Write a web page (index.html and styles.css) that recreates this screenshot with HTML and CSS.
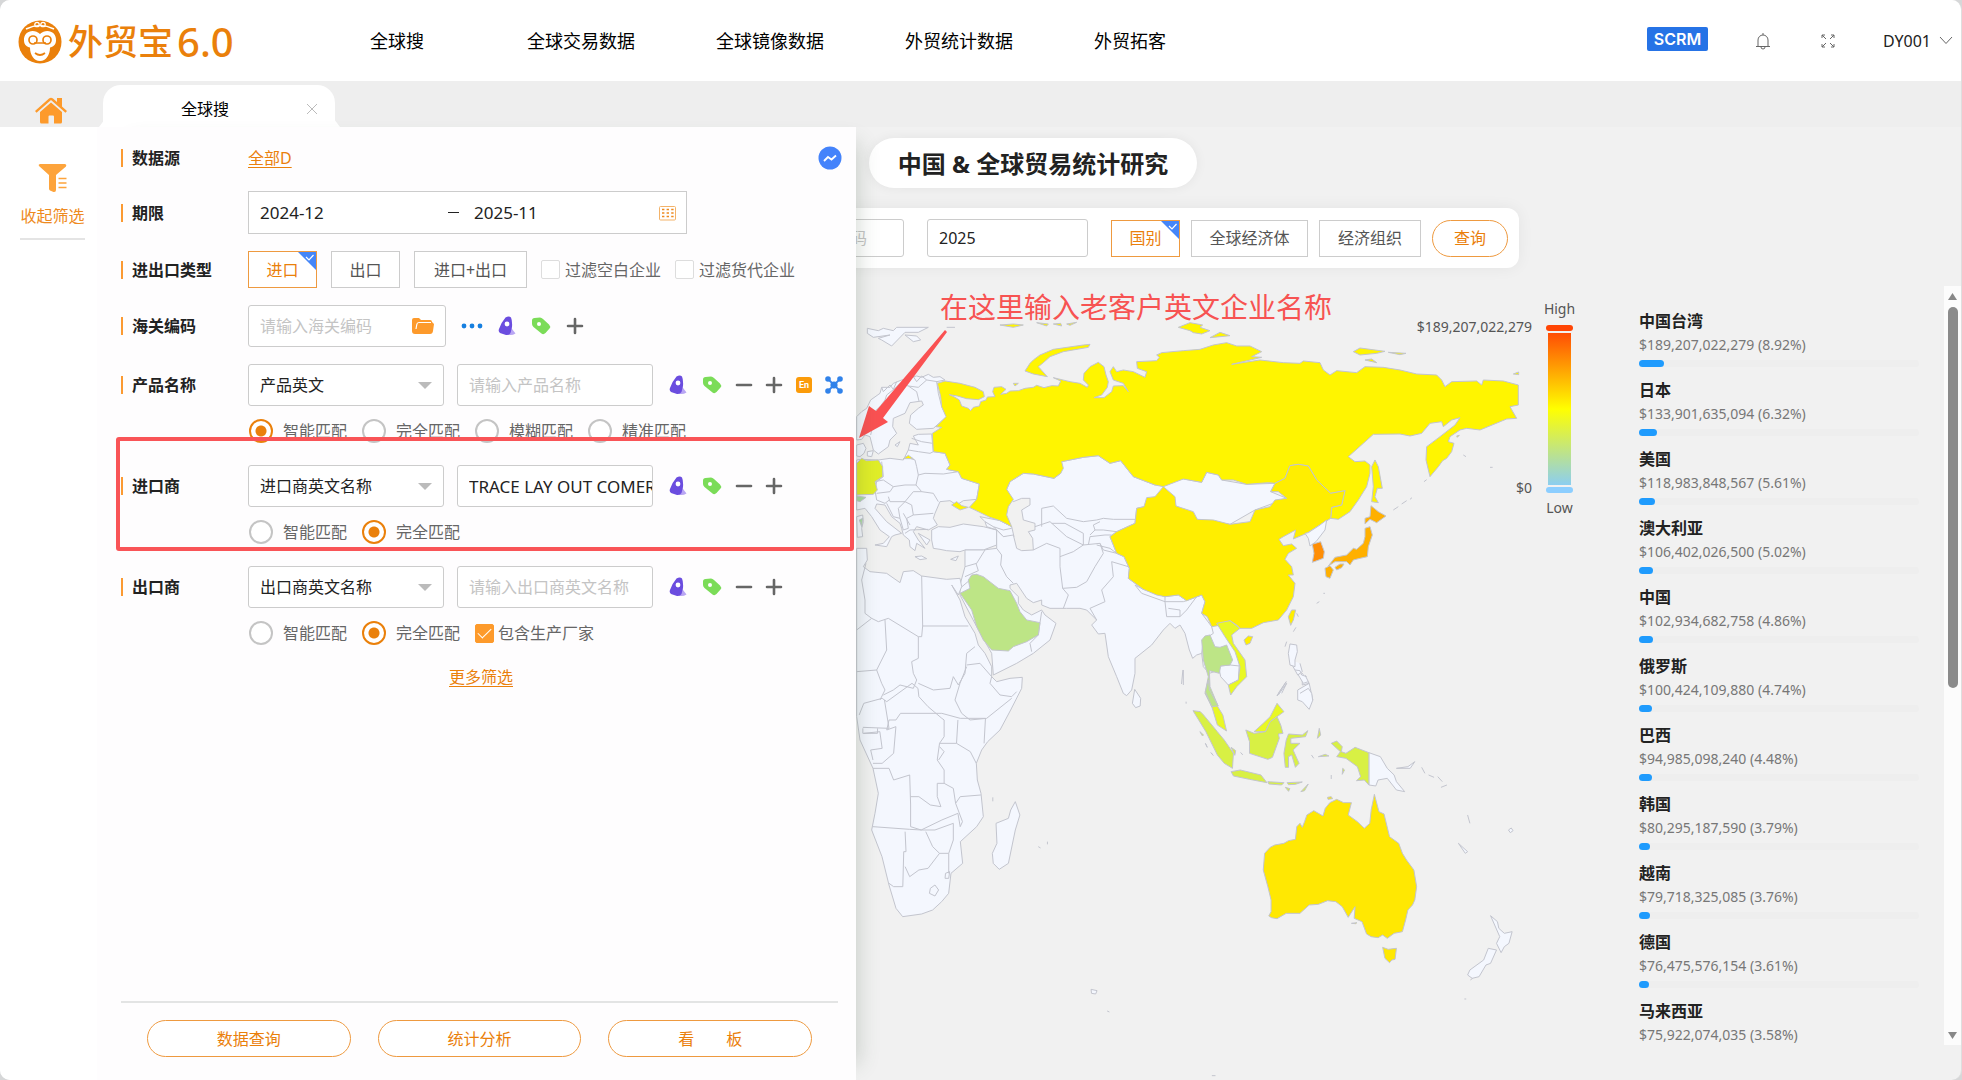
FILE: index.html
```html
<!DOCTYPE html>
<html lang="zh-CN">
<head>
<meta charset="utf-8">
<title>外贸宝6.0 - 全球搜</title>
<link rel="stylesheet" href="styles.css">
</head>
<body>
<svg class="defs" aria-hidden="true">
  <symbol id="rocket" viewBox="0 0 20 20"><path d="M12 9l6.500 8.500q-4 2.500-8 1z" fill="#b9a6f3"/><path d="M8.500 1.500Q12-.5 14 1.500Q15.500 5 15 11L13.500 17Q12 19.500 9 19L3 17Q1 15.500 2 13Q4.500 6 8.500 1.500z" fill="#6b4ddf"/><circle cx="10" cy="8" r="2.400" fill="#fff"/></symbol>
  <symbol id="tag" viewBox="0 0 20 20"><path d="M1 4.500Q1 2 3.500 2L9 1.500Q10.500 1.500 12 3L18 8.500Q20 10.500 18.500 12.500L14.500 17Q12.500 19 10.500 17.500L2.500 11Q1 9.500 1 8z" fill="#7bdc58"/><circle cx="8" cy="8" r="2" fill="#fff"/></symbol>
  <symbol id="plus" viewBox="0 0 20 20"><path d="M10 3v14M3 10h14" stroke="#666" stroke-width="2.600" stroke-linecap="round"/></symbol>
  <symbol id="minus" viewBox="0 0 20 20"><path d="M3 10h14" stroke="#666" stroke-width="2.600" stroke-linecap="round"/></symbol>
  <symbol id="corner" viewBox="0 0 18 18"><path d="M0 0h18v18z" fill="#4586f8"/><path d="M8 5l3 3 4.500-5" fill="none" stroke="#fff" stroke-width="1.200"/></symbol>
</svg>
<div class="frame">
  <header class="header">
    <a class="logo" href="#">
      <svg width="44" height="44" viewBox="0 0 44 44"><circle cx="22" cy="22" r="21.500" fill="#ea800b"/><path d="M22 14C16 8 5 11 6 21c.4 4 3 6 6 6.500C12 35 16 41 22 41s10-6 10-13.500c3-.5 5.600-2.500 6-6.500C39 11 28 8 22 14z" fill="#fff"/><path d="M8 9Q22 2 36 9" fill="none" stroke="#fff" stroke-width="1.500"/><g fill="none" stroke="#ea800b" stroke-width="1.700"><circle cx="15" cy="20" r="4"/><circle cx="29" cy="20" r="4"/><path d="M16 23h12M17 33q5 4 10 0"/></g><g fill="none" stroke="#fff" stroke-width="1.300"><circle cx="19" cy="4.500" r="2.200"/><circle cx="25" cy="4.500" r="2.200"/></g></svg>
      <span class="logo-name">外贸宝</span><span class="logo-ver">6.0</span>
    </a>
    <nav class="nav">
      <a class="first" href="#">全球搜</a><a href="#">全球交易数据</a><a href="#">全球镜像数据</a><a href="#">外贸统计数据</a><a href="#">外贸拓客</a>
    </nav>
    <div class="tools">
      <a class="scrm" href="#">SCRM</a>
      <button class="plain" aria-label="通知"><svg width="16" height="18" viewBox="0 0 16 18" fill="none" stroke="#666"><path d="M3 14V8a5 5 0 0 1 10 0v6M1 14.500h14M6 15a2 2 0 0 0 4 0M8 1v2"/></svg></button>
      <button class="plain" aria-label="全屏"><svg width="14" height="14" viewBox="0 0 14 14" fill="none" stroke="#666"><path d="M1 4V1h3M1 1l4 4M10 1h3v3M13 1L9 5M1 10v3h3M1 13l4-4M13 10v3h-3M13 13L9 9"/></svg></button>
      <button class="plain user">DY001<svg width="14" height="9" viewBox="0 0 14 9" fill="none" stroke="#666"><path d="M1 1l6 6.500L13 1"/></svg></button>
    </div>
  </header>
  <div class="tabs">
    <a class="home" href="#" aria-label="首页"><svg width="32" height="27" viewBox="0 0 32 27" fill="#fd9a2b"><path d="M0 14L14 1.500Q16 0 18 1.500L22 5V1h5v8.500L32 14l-1.500 1.800L16 3 1.500 15.800z"/><path d="M5 15L16 5.500 27 15v10q0 1.500-1.500 1.500H19v-7q0-1-1-1h-3.500q-1 0-1 1v7h-7Q5 26.500 5 25z"/></svg></a>
    <div class="tab"><span>全球搜</span><button class="plain" aria-label="关闭"><svg width="10" height="10" viewBox="0 0 10 10" stroke="#bbb"><path d="M0 0l10 10M10 0L0 10"/></svg></button></div>
  </div>
  <div class="body">
    <aside class="rail">
      <button class="plain fold"><svg width="30" height="30" viewBox="0 0 30 30"><path d="M1 3Q0 1 2.500 1h24Q29 1 28 3.500L18 12v15q0 2.500-2.500 2L12 27.500Q11 27 11 25.500V12z" fill="#fda43c"/><path d="M20.500 15.500h8M20.500 20h8M20.500 24.500h8" stroke="#fda43c" stroke-width="1.600"/></svg>收起筛选</button>
    </aside>
    <form class="panel">
      <div class="row source"><span class="label">数据源</span><a class="link" href="#">全部D</a>
        <button class="plain chat" type="button" aria-label="消息"><svg width="24" height="24" viewBox="0 0 24 24"><circle cx="12" cy="12" r="11.500" fill="#4483fb"/><path d="M6 15l4-4 3.500 2.500L18 9.500" fill="none" stroke="#fff" stroke-width="1.800"/></svg></button></div>
      <div class="row period"><span class="label">期限</span>
        <div class="range"><input class="from" aria-label="开始" value="2024-12"><i class="dash"></i><input aria-label="结束" value="2025-11">
        <svg width="17" height="16" viewBox="0 0 17 16"><rect x=".5" y="1.500" width="16" height="13.500" rx="1" fill="none" stroke="#f3b36a"/><path d="M3 4.500h12M3 8h12M3 11.500h12" stroke="#ee8a20" stroke-width="1.600" stroke-dasharray="2.400 2.200"/></svg></div></div>
      <div class="row kind"><span class="label">进出口类型</span>
        <div class="choices"><button type="button" class="pick on">进口<svg><use href="#corner"/></svg></button><button type="button" class="pick">出口</button><button type="button" class="pick wide">进口+出口</button>
        <label class="check"><input type="checkbox">过滤空白企业</label><label class="check"><input type="checkbox">过滤货代企业</label></div></div>
      <div class="row"><label class="label" for="hs">海关编码</label>
        <div class="field"><input id="hs" placeholder="请输入海关编码"><svg width="22" height="18" viewBox="0 0 22 18"><path d="M0 3Q0 1 2 1h5l2 2h9q2 0 2 2l2 2-1 7q-.4 3-3 3H3Q0 17 0 14z" fill="#fd9a2b"/><path d="M4 12l.8-4.500Q5 5.500 7 5.500H19" fill="none" stroke="#fff" stroke-width="1.200"/></svg></div>
        <div class="acts hs"><svg class="dots" viewBox="0 0 22 6" fill="#167fe0"><circle cx="3" cy="3" r="2.400"/><circle cx="11" cy="3" r="2.400"/><circle cx="19" cy="3" r="2.400"/></svg><svg><use href="#rocket"/></svg><svg><use href="#tag"/></svg><svg><use href="#plus"/></svg></div></div>
      <div class="row"><label class="label" for="prod">产品名称</label>
        <div class="pair"><div class="select"><select id="prod"><option>产品英文</option></select></div><input aria-label="产品名称" placeholder="请输入产品名称"></div>
        <div class="acts"><svg><use href="#rocket"/></svg><svg><use href="#tag"/></svg><svg><use href="#minus"/></svg><svg><use href="#plus"/></svg>
        <span class="en">En</span>
        <svg viewBox="0 0 20 20"><path d="M4 4l12 12M16 4L4 16" stroke="#3d86ec" stroke-width="1.800"/><g fill="#3182ea"><circle cx="4" cy="4" r="2.800"/><circle cx="16" cy="4" r="2.800"/><circle cx="4" cy="16" r="2.800"/><circle cx="16" cy="16" r="2.800"/><circle cx="10" cy="10" r="3.600"/></g></svg></div></div>
      <div class="radios"><label><input type="radio" name="a" checked>智能匹配</label><label><input type="radio" name="a">完全匹配</label><label><input type="radio" name="a">模糊匹配</label><label><input type="radio" name="a">精准匹配</label></div>
      <div class="marked">
      <div class="row"><label class="label" for="imp">进口商</label>
        <div class="pair"><div class="select"><select id="imp"><option>进口商英文名称</option></select></div><input class="company" aria-label="进口商英文名称" value="TRACE LAY OUT COMERCIO"></div>
        <div class="acts"><svg><use href="#rocket"/></svg><svg><use href="#tag"/></svg><svg><use href="#minus"/></svg><svg><use href="#plus"/></svg></div></div>
      <div class="radios"><label><input type="radio" name="b">智能匹配</label><label><input type="radio" name="b" checked>完全匹配</label></div>
      </div>
      <div class="row"><label class="label" for="exp">出口商</label>
        <div class="pair"><div class="select"><select id="exp"><option>出口商英文名称</option></select></div><input aria-label="出口商英文名称" placeholder="请输入出口商英文名称"></div>
        <div class="acts"><svg><use href="#rocket"/></svg><svg><use href="#tag"/></svg><svg><use href="#minus"/></svg><svg><use href="#plus"/></svg></div></div>
      <div class="radios"><label><input type="radio" name="c">智能匹配</label><label><input type="radio" name="c" checked>完全匹配</label><label class="check"><input type="checkbox" checked>包含生产厂家</label></div>
      <a class="link more" href="#">更多筛选</a>
      <div class="foot"><button type="button" class="round">数据查询</button><button type="button" class="round">统计分析</button><button type="button" class="round">看　　板</button></div>
    </form>
    <main class="stage">
      <section class="world">
        <h1 class="title">中国 &amp; 全球贸易统计研究</h1>
        <div class="bar"><input aria-label="海关编码" placeholder="请输入海关编码"><input aria-label="年份" value="2025">
          <div class="scope"><button class="pick on">国别<svg><use href="#corner"/></svg></button><button class="pick economy">全球经济体</button><button class="pick org">经济组织</button><button class="round ask">查询</button></div></div>
        <div class="chart">
          <svg class="map" viewBox="856 268 744 812" preserveAspectRatio="xMinYMin meet" role="img" aria-label="世界地图">
            <g class="land" transform="translate(850 300) scale(.33333)">
              <path d="M20 350L35 335 50 325 62 300 90 280 95 262 120 262 130 250 155 240 200 228 215 232 235 223 250 232 270 230 285 240 260 245 265 280 275 320 290 350 250 385 200 388 178 370 182 345 205 325 220 315 215 303 180 308 165 340 130 355 128 380 140 400 120 420 115 440 85 462 70 450 60 410 45 405 35 418 20 420z"/>
              <path class="line" d="M62 405L70 370 68 340 90 320 105 300 110 285 135 265 150 250 175 258 200 275 207 303M175 258L205 262 230 240 262 245M95 262L100 275 120 255 130 268 140 245M190 230L200 245 215 228 230 240"/>
              <path d="M20 435L40 430 48 445 42 460 30 470 20 468zM52 455L70 452 65 470 52 468zM135 435L150 425 142 440zM52 85L85 92 100 85 130 92 140 82 235 82 205 97 165 97 125 138 95 120 85 115 120 105 70 112 52 100zM165 105L200 108 212 120 190 125zM290 82h25"/>
              <path d="M190 408L205 403 245 402 250 455 285 460 300 495 290 508 325 515 335 535 388 552 380 598 340 602 320 615 300 602 270 605 255 640 250 655 262 675 235 690 200 680 190 695 205 720 225 745 200 730 195 752 180 740 178 720 160 705 155 685 150 670 125 650 105 615 80 612 75 625 110 665 155 700 135 705 125 710 110 740 75 735 100 730 118 710 90 690 65 650 45 625 20 630V480L35 478 85 480 120 475 160 480 165 470 175 450 180 430 205 435z"/>
              <path class="line" d="M95 485L100 530 80 545 75 570 20 585M75 545L100 540 130 560 165 555 198 555 205 525 200 500 195 480 165 470M175 450L205 455 240 460 250 455M185 415L215 425 248 430M205 525L225 520 280 522 325 515M198 555L215 575 250 580 265 605M130 560L120 575 80 580M115 590L120 605 165 605 190 575 215 575M75 570L80 600 105 610 118 600M110 610L130 650 150 655 145 625 165 605 185 615 190 645 250 640M150 655L160 690 175 685 170 655 190 645M165 700L180 690 235 688M160 640L180 675"/>
              <path d="M20 650L38 645 40 665 35 685 38 710 22 712zM195 770L215 768 230 776 210 779zM302 778L325 768 318 782zM205 700L240 720 230 735z"/>
              <path d="M245 690L265 680 300 682 340 672 400 680 440 690 440 735 400 750 345 750 330 755 290 752 270 748 250 745 245 720zM390 650L450 662 485 680 492 710 460 710 440 690 410 680 405 665z"/>
              <path class="line" d="M405 665L430 680 460 690 485 685M430 680L455 705 440 710"/>
              <path d="M470 568L480 545 520 520 550 522 612 535 632 520 635 485 700 472 745 467 780 490 812 482 850 530 915 555 1000 537 1055 547 1070 517 1105 525 1115 540 1190 553 1275 550 1262 575 1310 595 1215 630 1140 673 1042 658 978 618 915 590 882 620 860 625 855 670 800 695 780 710 800 760 822 770 838 805 835 835 880 868 945 890 985 885 1010 902 1055 885 1065 905 1055 940 1085 980 1105 970 1130 1010 1160 1050 1168 1090 1165 1140 1135 1155 1112 1130 1108 1110 1078 1120 1060 1100 1055 1060 1040 1065 1028 1075 1018 1050 1005 1000 990 975 975 985 960 970 940 990 905 1035 855 1075 855 1120 845 1170 830 1187 820 1180 800 1130 775 1070 765 1000 745 1002 725 975 740 960 710 930 690 925 650 925 600 925 575 915 575 900 550 908 530 895 500 850 480 855 480 865 505 890 505 910 520 930 545 945 575 930 585 945 618 970 600 1020 550 1060 500 1090 430 1125 425 1060 380 980 330 885 330 855 345 800 345 750 400 750 440 745 440 690 460 710 490 705 500 745 515 752 550 750 548 715 535 695 555 690 555 670 520 660 515 630 540 615 540 595 515 595 490 605z"/>
              <path class="line" d="M440 745L455 765 452 795 470 830 490 850M550 750L590 730 630 745 630 800 638 865 655 885 640 925M630 770L670 755 700 735 750 730 760 760 735 800 710 845 680 862 638 865M575 680V625L610 618 650 655 700 665 740 660 760 655 790 658 855 658M555 680L600 665 650 710 700 735 700 700 645 670 605 670M720 705L735 690 760 690 800 695M735 690L730 675 750 665M740 735L780 745 800 760M715 735L720 710 765 705 785 705M740 960L720 925 765 905 755 870 790 830 785 785 835 800M750 730L760 750 800 760M855 855L875 880 945 905 945 890M945 905L1000 905 1010 902M945 905L950 950 990 950 990 930 955 925M990 950L1010 930 1040 890 1055 885M855 855L880 868M345 800L380 790 405 750M330 865L380 823M345 830L385 812 378 790M540 1030L545 1055M540 1030L565 1005 570 968 575 935M1085 980L1090 1000 1060 1020 1055 1060M1112 1098L1140 1095 1168 1098"/>
              <path d="M20 745L50 745 52 780 40 800 60 815 110 820 150 848 160 815 190 812 215 828 290 838 330 835 335 860 325 885 305 855 330 900 345 950 375 1000 385 1035 405 1060 425 1100 425 1130 440 1145 480 1135 517 1132 515 1165 482 1230 450 1290 413 1325 395 1350 379 1390 382 1440 393 1480 400 1550 380 1580 331 1625 338 1690 303 1720 296 1780 275 1805 248 1830 215 1842 158 1850 138 1825 117 1755 96 1670 65 1590 75 1540 85 1480 69 1405 30 1320 20 1250z"/>
              <path class="line" d="M215 828L218 978H355M218 978L215 1010 205 1010V1075L185 1085 190 1120 200 1140 190 1165 150 1155 130 1170 100 1185M48 790L35 840 45 900 45 940 65 955 20 990M65 955L85 965 115 955 205 1010M105 960L110 1050 80 1110 95 1150 105 1170 90 1200M20 1115L80 1110M205 1150L250 1170 300 1165 310 1130 325 1155 345 1120 350 1060 375 1040M350 1095L390 1090 425 1130M425 1130L420 1150 450 1185 485 1190 500 1175M350 1100L330 1150 315 1200 335 1240 360 1260 410 1255 485 1195"/>
            </g>
            <g class="land" transform="translate(850 660) scale(.45918 .33333)">
              <path class="line" d="M20 165L30 130 70 115 80 125 135 70 148 85 150 110 170 140 200 175 205 180M85 180L100 180 110 160 200 160 240 175 295 175M85 180L80 210 100 200 95 280 70 310 50 310M75 120L85 205 28 202M28 205V220H60V205M30 220L65 215 70 265 45 270 50 300M205 180L205 230 195 250 190 300 205 330 205 370M205 370L190 370 190 410 198 440 175 435 150 410 132 410M235 180L232 250 262 275 275 310M295 175L292 250M195 250L232 250M195 260L205 275 193 300M50 325L85 325 95 360 130 345 132 435 M132 435L132 500 155 510 200 480 235 460 240 500 245 485 230 430 240 410 285 405M205 370L225 385 230 430M50 500L130 508 155 510 185 510 225 490M120 515L122 575 117 575 115 680 95 680 85 670M165 515L180 560 195 580 215 580 225 540 225 490M120 620L130 650 150 630 170 625 195 580M215 580L215 640M175 685L185 675 193 690 185 708 173 700zM208 640L217 635 215 655 207 655z"/>
              <path d="M360 425L370 465 360 510 345 610 325 628 312 610 310 580 320 550 318 490 345 475 350 450zM620 88L633 115 632 138 622 143 615 130zM1130 278L1155 290 1170 325 1185 345 1190 365 1208 395 1190 390 1170 355 1150 360 1145 378 1130 375zM1395 767L1410 785 1413 805 1425 820 1442 815 1435 850 1425 860 1418 878 1408 850 1415 830zM1390 865L1408 870 1395 910 1385 915 1370 950 1355 955 1345 945 1350 930 1380 900zM1325 550L1345 575 1340 580zM1434 510L1440 504 1444 512 1438 518zM958 0L965 20 975 45 985 35 980 10M985 40L1000 70 985 75zM975 90L1000 70 1008 120 1000 148 985 125 975 120zM930 108L950 65 935 95zM1190 325L1220 325 1230 305 1215 320zM1245 322L1252 340M1260 345L1272 352M1280 350L1290 365M1287 382L1300 375M1345 465L1350 490M525 988L538 992 535 1002 526 1000zM560 1053l5 3M788 1247h8M1338 1017h4M1351 960l5-5M725 30L722 72M732 125v6M410 560l5 4M430 545v8M311 412v12"/>
            </g>
            <g class="land" transform="translate(850 300) scale(.33333)">
              <path class="yellow" d="M262 250L285 243 330 250 375 262 400 275 403 290 385 299 350 296 322 288 298 284 315 292 328 300 335 318 355 325 362 332 370 322 388 318 392 305 408 300 412 291 435 290 428 275 432 262 455 260 468 268 452 283 470 280 480 273 505 272 525 265 550 262 560 256 582 263 605 257 625 258 632 243 610 233 660 245 690 250 712 262 715 255 700 240 702 220 720 200 745 187 762 200 768 225 775 245 772 262 755 285 732 293 762 293 785 275 790 258 820 257 835 275 820 250 790 240 780 215 790 200 800 215 820 210 850 215 885 232 890 215 862 205 860 185 920 182 928 172 920 165 935 158 1000 152 1050 148 1090 135 1130 128 1160 138 1200 138 1235 155 1205 170 1235 172 1145 193 1230 180 1300 188 1350 190 1360 183 1410 188 1420 210 1440 225 1460 212 1520 218 1545 200 1600 202 1650 210 1700 222 1760 225 1775 240 1785 260 1805 245 1880 243 1895 255 1900 240 1960 243 2005 255V315L1980 320 2000 355 1970 357 1890 390 1850 385 1830 390 1800 410 1795 425 1812 430 1805 455 1790 475 1778 482 1765 500 1740 530 1728 480 1730 440 1770 410 1815 375 1830 353 1805 360 1780 380 1775 365 1740 370 1715 400 1680 408 1650 402 1570 403 1540 430 1495 470 1515 485 1545 483 1560 495 1560 520 1550 560 1525 600 1500 635 1465 658 1442 655 1445 622 1475 615 1485 572 1442 580 1400 540 1375 498 1345 493 1320 497 1305 535 1275 550 1255 548 1190 553 1150 540 1115 540 1105 525 1070 517 1055 547 1000 537 940 560 915 555 850 530 812 482 780 490 745 467 700 472 635 485 640 505 632 520 612 535 550 522 520 520 480 545 470 568 490 598 475 620 470 645 485 680 450 662 420 652 358 622 380 598 388 552 335 535 325 515 290 508 300 495 285 460 250 455 247 400 275 382 258 380 288 350 275 320 272 290z"/>
              <path class="yellow" d="M525 213L540 190 550 180 570 165 610 148 700 135 720 133 715 142 640 155 600 170 580 188 565 200 592 230 550 222zM450 75L490 72 520 75 490 82zM560 68L595 72 590 78zM610 72L632 70 635 78zM650 72L680 67 660 76zM985 82L1020 68 1058 75 1050 82 1080 92 1055 102 1030 98 1020 92zM1080 113L1110 97 1140 107zM1510 155L1530 144 1605 154 1580 160 1530 165zM1615 157L1668 160 1650 164zM1545 180L1565 177 1580 188zM1990 222L2006 216 2006 224zM1565 500L1575 480 1585 500 1597 565 1582 565 1575 590 1585 608 1565 605 1570 560zM160 476L175 466 190 476zM305 615L320 605 335 617 355 622 330 630zM490 250L505 250 495 258zM1820 408l8-2-6 6z"/>
              <path class="china" d="M940 560L975 590 978 618 1030 635 1042 658 1090 660 1140 673 1200 665 1215 630 1260 620 1275 600 1310 595 1285 575 1262 575 1275 550 1305 535 1320 497 1345 493 1375 498 1400 540 1442 580 1485 572 1475 615 1445 622 1442 655 1410 675 1370 700 1330 717 1337 690 1300 710 1287 718 1300 737 1325 732 1340 745 1315 760 1305 778 1325 800 1330 825 1315 825 1335 850 1330 890 1310 930 1285 960 1240 968 1205 985 1170 985 1160 975 1140 962 1115 975 1085 980 1072 950 1055 940 1065 905 1055 885 1010 902 985 885 945 890 920 885 880 868 835 835 838 805 822 770 800 760 780 710 800 695 855 670 860 625 882 620 890 593 915 590zM1315 950L1325 930 1337 930 1330 960 1322 976zM1182 1020L1195 1008 1208 1010 1200 1030 1188 1035z"/>
              <path d="M1365 700L1375 698 1410 675 1430 660 1425 690 1398 725 1380 738 1375 715z"/>
              <path class="korea" d="M1387 733L1412 725 1423 755 1420 775 1387 787 1392 760z"/>
              <path class="japan" d="M1563 617L1585 635 1608 648 1580 668 1560 658 1545 672 1545 655 1560 650zM1545 685L1560 680 1567 705 1555 740 1552 770 1530 775 1510 780 1500 795 1490 785 1455 785 1435 798 1455 772 1490 765 1510 745 1520 748 1540 730 1545 710zM1455 802L1470 792 1482 792 1475 803 1460 810zM1425 805L1440 797 1450 810 1440 835 1428 830z"/>
              <path class="green" d="M330 880L360 865 355 840 365 825 380 823 400 830 445 865 480 872 500 910 510 935 530 960 570 968 565 1005 530 1025 490 1040 475 1053 425 1050 400 1020 380 980 365 930zM1055 1020L1065 1008 1080 1005 1095 1040 1110 1042 1130 1035 1148 1080 1140 1095 1112 1098 1108 1120 1078 1112 1080 1160 1103 1215 1085 1220 1065 1180 1075 1130 1060 1080z"/>
              <path class="lime" d="M1100 970L1140 962 1170 985 1145 1005 1150 1030 1185 1080 1190 1130 1160 1160 1142 1185 1135 1155 1165 1140 1170 1100 1155 1055 1125 1010z"/>
              <path class="germany" d="M20 490L35 475 50 482 85 480 98 500 98 530 75 545 82 570 70 583 20 585z"/>
              <path class="swiss" d="M20 588L48 592 30 605 20 602zM28 660L38 655 35 680z"/>
              <path d="M1320 1032L1340 1035 1342 1055 1335 1080 1335 1100 1320 1095 1315 1060zM1335 1110L1350 1112 1355 1125 1370 1130M1345 1125L1360 1150 1375 1145 1365 1125M1350 1180L1375 1165 1385 1180 1388 1200M1285 1185L1310 1150 1295 1180M1340 940L1345 950M1330 995L1338 982M1400 910L1408 905M1420 880h5M1305 1040l5-15M1000 1110v45M1630 630L1645 620M1655 612l15-10M1680 598l6-5M1840 465l8 5M1920 502h8M1722 545l8-6"/>
            </g>
            <g class="land" transform="translate(850 660) scale(.45918 .33333)">
              <path class="green" d="M774 95L780 60 783 90 802 138 788 140z"/>
              <path class="lime" d="M788 140L800 138 812 165 820 213 800 195zM880 215L900 190 915 170 930 130 945 155 930 170 915 185 905 215z"/>
              <path class="indo" d="M747 152L763 155 770 165 800 215 815 240 835 280 833 325 815 310 800 285 775 215zM862 210L880 220 905 215 915 185 930 170 938 195 943 220 933 222 935 235 920 292 910 298 870 280 870 245zM950 240L955 222 985 225 997 212 992 230 960 235 960 250 980 250 965 270 978 310 970 322 962 285 955 290 955 322 948 322 945 280zM830 335L850 330 895 345 908 368 870 358 835 348zM910 365L945 368 940 375 912 372zM952 368L985 366 970 373 955 374zM982 395L998 372 990 392zM948 382L958 386 955 394zM1018 235L1022 205 1025 225zM1048 250L1060 243 1072 260 1070 275 1080 280 1100 262 1130 278 1130 375 1120 360 1103 362 1112 350 1105 320 1080 295 1060 290 1068 275zM1005 285L1010 295M1020 290L1043 288 1035 283zM1073 325L1077 330 1072 343zM762 215l8 10-3 2zM774 250l4 12zM786 278l5 8zM830 262l10 10-2 14zM851 278l4 6zM1048 345v12"/>
              <path class="australia" d="M903 580L915 562 925 555 945 550 955 542 970 538 973 500 980 490 985 502 990 485 995 465 1010 452 1020 460 1030 468 1035 445 1045 428 1060 418 1075 428 1092 428 1085 465 1105 485 1120 505 1132 490 1135 450 1142 403 1152 455 1163 462 1175 530 1195 550 1203 580 1212 600 1228 630 1234 680 1230 720 1225 735 1215 750 1210 780 1203 815 1185 820 1170 835 1160 825 1150 833 1135 830 1125 822 1115 785 1098 775 1100 740 1085 772 1072 740 1058 725 1040 722 1020 733 1000 735 980 760 950 760 930 776 918 773 912 768 917 755 917 720 910 680 900 630zM1160 862L1172 868 1190 865 1187 898 1180 900 1175 908 1165 895zM1092 790l12-2-3 3zM1040 412l8-2 3 6-10 2z"/>
            </g>
          </svg>
          <div class="legend"><span class="end">High</span><span class="value">$189,207,022,279</span><div class="scale"></div><span class="value">$0</span><span class="end">Low</span></div>
          <p class="note">在这里输入老客户英文企业名称</p>
          <svg class="arrow" width="90" height="108" viewBox="858 330 90 108"><path d="M859 438l10-32 7 5 69-81 2 2-64 86 5 4z" fill="#fa5152"/></svg>
        </div>
      </section>
      <aside class="rank">
        <ol>
          <li><b>中国台湾</b><span>$189,207,022,279 (8.92%)</span><div class="track"><i style="width:8.92%"></i></div></li>
          <li><b>日本</b><span>$133,901,635,094 (6.32%)</span><div class="track"><i style="width:6.32%"></i></div></li>
          <li><b>美国</b><span>$118,983,848,567 (5.61%)</span><div class="track"><i style="width:5.61%"></i></div></li>
          <li><b>澳大利亚</b><span>$106,402,026,500 (5.02%)</span><div class="track"><i style="width:5.02%"></i></div></li>
          <li><b>中国</b><span>$102,934,682,758 (4.86%)</span><div class="track"><i style="width:4.86%"></i></div></li>
          <li><b>俄罗斯</b><span>$100,424,109,880 (4.74%)</span><div class="track"><i style="width:4.74%"></i></div></li>
          <li><b>巴西</b><span>$94,985,098,240 (4.48%)</span><div class="track"><i style="width:4.48%"></i></div></li>
          <li><b>韩国</b><span>$80,295,187,590 (3.79%)</span><div class="track"><i style="width:3.79%"></i></div></li>
          <li><b>越南</b><span>$79,718,325,085 (3.76%)</span><div class="track"><i style="width:3.76%"></i></div></li>
          <li><b>德国</b><span>$76,475,576,154 (3.61%)</span><div class="track"><i style="width:3.61%"></i></div></li>
          <li><b>马来西亚</b><span>$75,922,074,035 (3.58%)</span></li>
        </ol>
        <div class="scroll"><svg width="9" height="7" viewBox="0 0 9 7"><path d="M0 7L4.500 0 9 7z" fill="#888"/></svg><i></i><svg width="9" height="7" viewBox="0 0 9 7"><path d="M0 0h9L4.500 7z" fill="#888"/></svg></div>
      </aside>
    </main>
  </div>
</div>
</body>
</html>
```
FILE: styles.css
```css
*, *::before, *::after { box-sizing: border-box; }
body { margin: 0; background: #d6d7d8; color: #222; font: 16px/24px "Noto Sans", "Noto Sans CJK SC", sans-serif; }
button, input, select { font: inherit; color: inherit; margin: 0; padding: 0; }
a { color: inherit; text-decoration: none; }
svg { display: block; flex: none; }
.defs { position: absolute; width: 0; height: 0; }
.frame { min-height: 100vh; display: flex; flex-direction: column; background: #f1f1f1; border-right: 1px solid #dedede; border-radius: 10px; overflow: hidden; }
.plain { border: 0; background: none; }

.header { height: 81px; display: flex; align-items: center; padding: 0 8px 0 18px; background: #fff; }
.logo { width: 352px; display: flex; align-items: center; padding-top: 2px; color: #ea800b; line-height: 44px; }
.logo svg { margin-right: 6px; }
.logo-name { font-size: 35px; font-weight: 500; }
.logo-ver { font-size: 40px; font-weight: 500; margin-left: 4px; }
.nav { display: flex; gap: 81px; font-size: 18px; color: #000; }
.nav .first { margin-right: 22px; }
.tools { margin-left: auto; display: flex; align-items: center; }
.scrm { width: 61px; height: 24px; margin: 0 47px 4px 0; border-radius: 2px; background: #2673e6; color: #fff; font: 600 16px/24px Inter, sans-serif; text-align: center; }
.tools .plain + .plain { margin-left: 50px; }
.tools .plain.user { display: flex; align-items: center; gap: 8px; margin-left: 48px; }

.tabs { height: 46px; display: flex; align-items: flex-end; background: #eee; }
.home { width: 103px; padding: 0 0 3px 35px; }
.tab { position: relative; width: 232px; height: 42px; display: flex; align-items: center; justify-content: flex-end; padding: 5px 18px 0 0; gap: 78px; background: #fff; border-radius: 18px 18px 0 0; color: #000; }
.tab::before, .tab::after { content: ""; position: absolute; bottom: 0; width: 6px; height: 8px; background: #fff; }
.tab::before { left: -4px; clip-path: polygon(100% 0, 100% 100%, 0 100%); }
.tab::after { right: -5px; clip-path: polygon(0 0, 100% 100%, 0 100%); }

.body { flex: 1; display: grid; grid-template-columns: 97px 759px 1fr; }
.rail { background: #fff; padding: 36px 12px 0 20px; }
.fold { width: 65px; height: 77px; display: flex; flex-direction: column; align-items: center; gap: 11px; color: #ee8a20; border-bottom: 2px solid #e4e4e4; white-space: nowrap; }
.panel { position: relative; z-index: 2; display: flex; flex-direction: column; padding: 15px 18px 0 24px; background: #fefdfe; box-shadow: 18px 0 20px -16px rgba(70, 90, 70, .24); }
.row { height: 42px; display: flex; align-items: center; }
.label { flex: none; width: 127px; padding-left: 9px; border-left: 2px solid #fb9a32; font-weight: 700; line-height: 18px; }
.link { color: #ea800b; text-decoration: underline; text-underline-offset: 3px; }
.source { height: 31px; }
.chat { margin: 0 -4px 0 auto; height: 24px; }
.period { height: 43px; margin: 18px 0 17px; }
.kind { height: 37px; margin-bottom: 17px; }
.kind + .row { margin-bottom: 17px; }
.range { width: 439px; height: 43px; display: flex; align-items: center; border: 1px solid #ccc; background: #fff; padding: 0 10px 0 11px; font-size: 17px; }
.range input { flex: 1; min-width: 0; border: 0; background: none; outline: 0; }
.range .from { flex: none; width: 188px; }
.dash { flex: none; width: 11px; height: 1px; margin-right: 15px; background: #222; }
.choices { display: flex; align-items: center; gap: 14px; }
.pick { position: relative; flex: none; width: 69px; height: 37px; border: 1px solid #ccc; background: #fff; color: #555; }
.pick.on { border-color: #ee9a40; color: #ea800b; }
.pick svg { position: absolute; top: 0; right: 0; width: 18px; height: 18px; }
.pick.wide { width: 113px; }
.check { display: flex; align-items: center; gap: 5px; color: #666; white-space: nowrap; }
.check input { appearance: none; width: 19px; height: 19px; border: 1px solid #ddd; border-radius: 2px; background: #fff; display: grid; place-items: center; }
.check input:checked { background: #fd9a2b; border-color: #fd9a2b; }
.check input:checked::before { content: ""; width: 13px; height: 7px; margin-bottom: 4px; border: solid #fff; border-width: 0 0 1px 1px; transform: rotate(-45deg); }
input::placeholder { color: #c4c4c4; opacity: 1; }
.field { width: 198px; height: 42px; display: flex; align-items: center; padding: 0 11px; border: 1px solid #ccc; border-radius: 3px; background: #fff; }
.field input { flex: 1; min-width: 0; border: 0; background: none; outline: 0; }
.pair { display: grid; grid-template-columns: 196px 196px; gap: 13px; }
.pair input, .pair select { width: 100%; height: 42px; padding: 0 0 0 11px; border: 1px solid #ccc; border-radius: 3px; background: #fff; outline: 0; }
.pair .company { font-size: 17px; }
.pair select { appearance: none; }
.select { position: relative; }
.select::after { content: ""; position: absolute; top: 18px; right: 12px; border: 7px solid transparent; border-top-color: #bbb; border-bottom: 0; }
.acts { display: flex; align-items: center; gap: 10px; margin-left: 15px; }
.acts svg { width: 20px; height: 20px; }
.acts svg + svg:nth-child(2) { margin: 0 2px 0 4px; }
.acts.hs svg:nth-child(n) { margin: 0 4px 0 0; }
.acts.hs .dots { width: 22px; height: 6px; margin: 0 6px 0 0; }
.en { width: 16px; height: 16px; margin: 0 2px; border-radius: 3px; background: #fb9b0a; color: #fff; font: 700 9px/16px Roboto, sans-serif; text-align: center; }
.radios { display: flex; gap: 15px; height: 24px; margin: 13px 0 22px 128px; color: #666; }
.radios label { display: flex; align-items: center; gap: 10px; white-space: nowrap; }
.radios .check { gap: 4px; }
.radios input[type=radio] { appearance: none; width: 24px; height: 24px; border: 2px solid #c4c4c4; border-radius: 50%; background: #fff; }
.radios input[type=radio]:checked { border-color: #ea800b; background: radial-gradient(circle, #ea800b 5px, #fff 6px); }
.marked { position: relative; }
.marked::after { content: ""; position: absolute; top: -28px; right: -16px; left: -5px; height: 114px; border: 4px solid #f95457; border-radius: 3px; pointer-events: none; }
.more { align-self: flex-start; margin: -2px 0 0 328px; }
.foot { margin-top: auto; display: flex; gap: 27px; padding: 17px 26px 23px; border-top: 2px solid #e3e4e4; }
.round { flex: 1; height: 37px; border: 1px solid #ee9a40; border-radius: 19px; background: #fff; color: #ea800b; }

.stage { display: grid; grid-template-columns: 1fr 361px; min-width: 0; }
.title { width: 328px; height: 50px; margin: 11px 0 20px 13px; border-radius: 25px; background: #fff; box-shadow: 0 0 12px rgba(0, 0, 0, .06); font-size: 24px; line-height: 52px; text-align: center; white-space: nowrap; }
.bar { width: 799px; height: 60px; display: flex; align-items: center; gap: 23px; margin-left: -136px; padding: 0 11px 0 23px; border-radius: 12px; background: #fff; box-shadow: 0 0 16px rgba(0, 0, 0, .06); }
.bar input { width: 161px; height: 38px; padding: 0 11px; border: 1px solid #ccc; border-radius: 3px; background: #fff; }
.scope { flex: 1; display: flex; gap: 11px; }
.pick.economy { width: 117px; }
.pick.org { width: 102px; }
.chart { position: relative; }
.map { width: 100%; height: auto; }
.land path { fill: #f4f7fe; stroke: #c3c5ce; stroke-width: 1; vector-effect: non-scaling-stroke; stroke-linejoin: round; }
.land .line { fill: none; }
.land .yellow { fill: #fff500; }
.land .china { fill: #ffee00; }
.land .korea { fill: #ff8e05; }
.land .japan { fill: #ffb000; }
.land .green { fill: #bde586; }
.land .lime { fill: #e9f824; }
.land .indo { fill: #d8f044; }
.land .germany { fill: #e0ee28; }
.land .swiss { fill: #a8dc9c; }
.land .australia { fill: #ffe802; }
.legend { position: absolute; top: 31px; right: 24px; display: grid; grid-template-columns: auto 33px; column-gap: 11px; font-size: 14px; line-height: 20px; color: #555; text-align: right; }
.legend .end { grid-column: 2; text-align: center; }
.legend .value { grid-column: 1; }
.scale { grid-column: 2; grid-row: 2 / 4; display: flex; flex-direction: column; justify-content: space-between; height: 168px; margin: 6px 3px 5px; background: linear-gradient(#ff4d05, #ff0 50%, #8ccef0) center / 23px 152px no-repeat; }
.scale::before, .scale::after { content: ""; height: 6px; border-radius: 3px; background: #ff4504; }
.scale::after { background: #8cceff; }
.legend .value:nth-child(2) { grid-row: 2; margin-top: -2px; }
.legend .value:nth-child(4) { grid-row: 3; align-self: end; }
.note { position: absolute; top: 19px; left: 84px; margin: 0; color: #f75352; font-size: 28px; line-height: 40px; white-space: nowrap; }
.arrow { position: absolute; top: 62px; left: 2px; }

.rank { display: grid; grid-template-columns: 1fr 17px; gap: 25px; margin: 159px 0 35px; padding-left: 39px; }
.rank ol { margin: 0; padding: 23px 0 0; list-style: none; }
.rank li { height: 69px; color: #777; font-size: 14px; line-height: 24px; }
.rank li:last-child { height: 46px; }
.rank b, .rank span { display: block; }
.rank b { color: #222; font-size: 16px; }
.track { height: 7px; margin-top: 3px; border-radius: 4px; background: #eee; }
.track i { display: block; height: 7px; border-radius: 4px; background: #1f9bfd; }
.scroll { display: flex; flex-direction: column; align-items: center; padding: 7px 0 6px; background: #fcfcfc; }
.scroll i { width: 10px; height: 381px; margin: 7px 0 auto; border-radius: 5px; background: #8b8b8b; }
```
